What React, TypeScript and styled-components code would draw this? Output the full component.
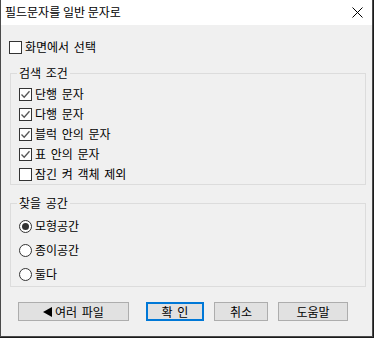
import styled, { createGlobalStyle } from "styled-components";

const GlobalStyle = createGlobalStyle`
    html, body {
        margin: 0;
        padding: 0;
        background: #1b1b1b;
    }
    body {
        font-family: "Noto Sans CJK KR", "Noto Sans", sans-serif;
        font-size: 12px;
        color: #000;
    }
`

const Window = styled.div`
    width: 373px;
    height: 337px;
    box-sizing: border-box;
    border: 1px solid #4a4a4a;
    border-top: none;
    background-color: #f0f0f0;
    display: flex;
    flex-direction: column;
`

const TitleBar = styled.div`
    height: 25px;
    background-color: #fff;
    display: flex;
    align-items: center;
    justify-content: space-between;
    padding: 0 9px 0 4px;
    flex-shrink: 0;
`

const Title = styled.span`
    font-size: 12px;
    line-height: 14px;
    margin-top: -1px;
`

const Body = styled.div`
    padding: 12px 7px 0 8px;
    display: flex;
    flex-direction: column;
    word-spacing: 2px;
`

const Row = styled.label<{ $h: number }>`
    display: flex;
    align-items: center;
    height: ${p => p.$h}px;
    gap: 3px;
    line-height: 14px;
    white-space: nowrap;
`

const Box = styled.span`
    width: 13px;
    height: 13px;
    box-sizing: border-box;
    border: 1px solid #333;
    background: #fff;
    display: inline-flex;
    align-items: center;
    justify-content: center;
    flex-shrink: 0;
`

const Circle = styled.span`
    width: 13px;
    height: 13px;
    box-sizing: border-box;
    border: 1px solid #333;
    border-radius: 50%;
    background: #fff;
    display: inline-flex;
    align-items: center;
    justify-content: center;
    flex-shrink: 0;
`

const Dot = styled.span`
    width: 7px;
    height: 7px;
    border-radius: 50%;
    background: #333;
`

const Group = styled.div<{ $top: number; $pad: number }>`
    position: relative;
    margin-top: ${p => p.$top}px;
    margin-left: 1px;
    width: 356px;
    box-sizing: border-box;
    border: 1px solid #dcdcdc;
    padding: ${p => p.$pad}px 8px 0 8px;
    display: flex;
    flex-direction: column;
`

const Legend = styled.span`
    position: absolute;
    top: -8px;
    left: 6px;
    padding: 0 2px;
    background: #f0f0f0;
    line-height: 14px;
`

const ButtonRow = styled.div`
    display: flex;
    margin: 15px 0 0 9px;
`

const Button = styled.button<{ $w: number; $gap: number; $primary?: boolean }>`
    width: ${p => p.$w}px;
    height: 19px;
    margin-left: ${p => p.$gap}px;
    box-sizing: border-box;
    background: #e1e1e1;
    border: ${p => (p.$primary ? "2px solid #0078d7" : "1px solid #adadad")};
    font-family: inherit;
    font-size: 12px;
    line-height: 14px;
    word-spacing: 2px;
    padding: 0;
    color: #000;
    display: flex;
    align-items: center;
    justify-content: center;
    gap: 3px;
`

const Check = ({ on, label, h }: { on?: boolean; label: string; h: number }) => (
    <Row $h={h}>
        <Box>
            {on && (
                <svg width="11" height="11" viewBox="0 0 11 11">
                    <path d="M1.5 5.5 L4.2 8.3 L9.5 2.2" fill="none" stroke="#555" strokeWidth="1.3" />
                </svg>
            )}
        </Box>
        {label}
    </Row>
)

const Radio = ({ on, label }: { on?: boolean; label: string }) => (
    <Row $h={24}>
        <Circle>{on && <Dot />}</Circle>
        {label}
    </Row>
)

const App = () => {
    return <>
        <GlobalStyle />
        <Window>
            <TitleBar>
                <Title>필드문자를 일반 문자로</Title>
                <svg width="11" height="11" viewBox="0 0 11 11">
                    <path d="M0.5 0.5 L10.5 10.5 M10.5 0.5 L0.5 10.5" stroke="#000" strokeWidth="1" />
                </svg>
            </TitleBar>
            <Body>
                <Check label="화면에서 선택" h={20} />
                <Group $top={16} $pad={10}>
                    <Legend>검색 조건</Legend>
                    <Check on label="단행 문자" h={20} />
                    <Check on label="다행 문자" h={20} />
                    <Check on label="블럭 안의 문자" h={20} />
                    <Check on label="표 안의 문자" h={20} />
                    <Check label="잠긴 켜 객체 제외" h={20} />
                </Group>
                <Group $top={18} $pad={10}>
                    <Legend>찾을 공간</Legend>
                    <Radio on label="모형공간" />
                    <Radio label="종이공간" />
                    <Radio label="둘다" />
                </Group>
                <ButtonRow>
                    <Button $w={111} $gap={0}>
                        <svg width="9" height="10" viewBox="0 0 9 10">
                            <path d="M0 5 L9 0 L9 10 Z" fill="#000" />
                        </svg>
                        여러 파일
                    </Button>
                    <Button $w={58} $gap={17} $primary>확 인</Button>
                    <Button $w={54} $gap={10}>취소</Button>
                    <Button $w={70} $gap={10}>도움말</Button>
                </ButtonRow>
            </Body>
        </Window>
    </>
}

export default App;
